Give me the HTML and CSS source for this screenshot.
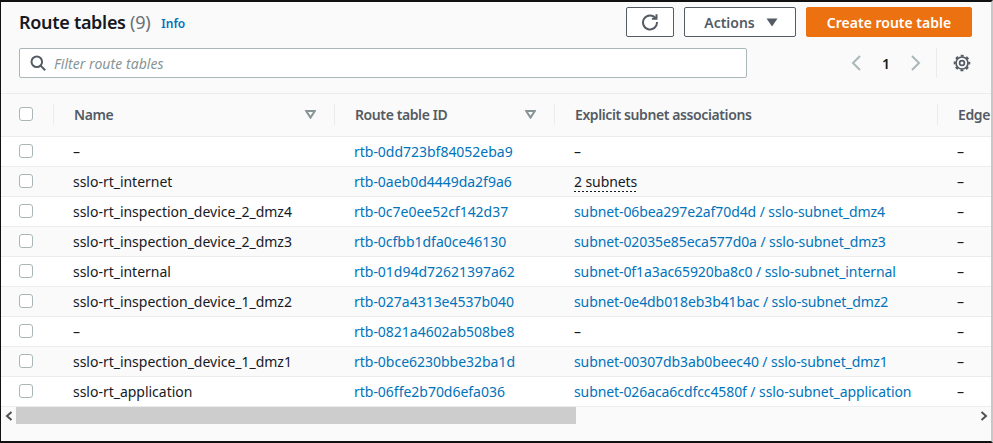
FILE: index.html
```html
<!DOCTYPE html>
<html lang="en">
<head>
<meta charset="utf-8">
<title>Route tables</title>
<link rel="stylesheet" href="styles.css">
</head>
<body>
<main class="frame">
  <header class="top">
    <h1 class="title">Route tables <span class="count">(9)</span></h1>
    <a class="info">Info</a>
    <div class="actions">
      <button class="btn btn-icon"><svg width="18" height="18" viewBox="0 0 18 18" fill="none" stroke="#545b64" stroke-width="2"><path d="M14.6 5.2A7 7 0 1 0 16 9"/><path d="M15.5 1.2v4.6h-4.6" stroke-linejoin="miter"/></svg></button>
      <button class="btn btn-actions">Actions <svg class="caret" width="12" height="9" viewBox="0 0 12 9"><path d="M0.5 0.5h11L6 8.5z" fill="#545b64"/></svg></button>
      <button class="btn btn-primary">Create route table</button>
    </div>
  </header>
  <div class="toolbar">
    <div class="filter">
      <svg width="16" height="16" viewBox="0 0 16 16" fill="none" stroke="#545b64" stroke-width="2"><circle cx="6.8" cy="6.8" r="5.3"/><path d="M10.6 10.6l4.6 4.6"/></svg>
      <span class="placeholder">Filter route tables</span>
    </div>
    <nav class="pager">
      <svg width="12" height="16" viewBox="0 0 12 16" fill="none" stroke="#aab7b8" stroke-width="2"><path d="M10 1L3 8l7 7"/></svg>
      <span class="page">1</span>
      <svg width="12" height="16" viewBox="0 0 12 16" fill="none" stroke="#aab7b8" stroke-width="2"><path d="M2 1l7 7-7 7"/></svg>
    </nav>
    <div class="settings">
      <svg width="18" height="18" viewBox="0 0 18 18" fill="none" stroke="#545b64"><circle cx="9" cy="9" r="6" stroke-width="1.7"/><circle cx="9" cy="9" r="7.3" stroke-width="2" stroke-dasharray="2.9 2.83" stroke-dashoffset="1.45"/><circle cx="9" cy="9" r="2.4" stroke-width="1.7"/></svg>
    </div>
  </div>
  <div class="table">
    <div class="row head">
      <div class="cell c-check"><span class="box"></span></div>
      <div class="cell c-name"><span class="hlabel">Name</span><svg class="sort" width="11" height="9" viewBox="0 0 11 9"><path d="M1.2 1h8.6L5.5 7.6z" fill="none" stroke="#879596" stroke-width="2"/></svg></div>
      <div class="cell c-id"><span class="hlabel">Route table ID</span><svg class="sort" width="11" height="9" viewBox="0 0 11 9"><path d="M1.2 1h8.6L5.5 7.6z" fill="none" stroke="#879596" stroke-width="2"/></svg></div>
      <div class="cell c-assoc"><span class="hlabel">Explicit subnet associations</span></div>
      <div class="cell c-edge"><span class="hlabel">Edge</span></div>
    </div>
    <div class="row"><div class="cell c-check"><span class="box"></span></div><div class="cell c-name">–</div><div class="cell c-id"><a>rtb-0dd723bf84052eba9</a></div><div class="cell c-assoc">–</div><div class="cell c-edge">–</div></div>
    <div class="row alt"><div class="cell c-check"><span class="box"></span></div><div class="cell c-name">sslo-rt_internet</div><div class="cell c-id"><a>rtb-0aeb0d4449da2f9a6</a></div><div class="cell c-assoc"><span class="dotted">2 subnets</span></div><div class="cell c-edge">–</div></div>
    <div class="row"><div class="cell c-check"><span class="box"></span></div><div class="cell c-name">sslo-rt_inspection_device_2_dmz4</div><div class="cell c-id"><a>rtb-0c7e0ee52cf142d37</a></div><div class="cell c-assoc"><a>subnet-06bea297e2af70d4d / sslo-subnet_dmz4</a></div><div class="cell c-edge">–</div></div>
    <div class="row alt"><div class="cell c-check"><span class="box"></span></div><div class="cell c-name">sslo-rt_inspection_device_2_dmz3</div><div class="cell c-id"><a>rtb-0cfbb1dfa0ce46130</a></div><div class="cell c-assoc"><a>subnet-02035e85eca577d0a / sslo-subnet_dmz3</a></div><div class="cell c-edge">–</div></div>
    <div class="row"><div class="cell c-check"><span class="box"></span></div><div class="cell c-name">sslo-rt_internal</div><div class="cell c-id"><a>rtb-01d94d72621397a62</a></div><div class="cell c-assoc"><a>subnet-0f1a3ac65920ba8c0 / sslo-subnet_internal</a></div><div class="cell c-edge">–</div></div>
    <div class="row alt"><div class="cell c-check"><span class="box"></span></div><div class="cell c-name">sslo-rt_inspection_device_1_dmz2</div><div class="cell c-id"><a>rtb-027a4313e4537b040</a></div><div class="cell c-assoc"><a>subnet-0e4db018eb3b41bac / sslo-subnet_dmz2</a></div><div class="cell c-edge">–</div></div>
    <div class="row"><div class="cell c-check"><span class="box"></span></div><div class="cell c-name">–</div><div class="cell c-id"><a>rtb-0821a4602ab508be8</a></div><div class="cell c-assoc">–</div><div class="cell c-edge">–</div></div>
    <div class="row alt"><div class="cell c-check"><span class="box"></span></div><div class="cell c-name">sslo-rt_inspection_device_1_dmz1</div><div class="cell c-id"><a>rtb-0bce6230bbe32ba1d</a></div><div class="cell c-assoc"><a>subnet-00307db3ab0beec40 / sslo-subnet_dmz1</a></div><div class="cell c-edge">–</div></div>
    <div class="row"><div class="cell c-check"><span class="box"></span></div><div class="cell c-name">sslo-rt_application</div><div class="cell c-id"><a>rtb-06ffe2b70d6efa036</a></div><div class="cell c-assoc"><a>subnet-026aca6cdfcc4580f / sslo-subnet_application</a></div><div class="cell c-edge">–</div></div>
  </div>
  <div class="scrollbar">
    <span class="arrow"><svg width="8" height="10" viewBox="0 0 8 10"><path d="M6.5 1L2 5l4.5 4" fill="none" stroke="#505050" stroke-width="2"/></svg></span>
    <span class="thumb"></span>
    <span class="rail"></span>
    <span class="arrow"><svg width="8" height="10" viewBox="0 0 8 10"><path d="M1.5 1L6 5 1.5 9" fill="none" stroke="#505050" stroke-width="2"/></svg></span>
  </div>
</main>
</body>
</html>
```
FILE: styles.css
```css
* { box-sizing: border-box; }
html, body { margin: 0; padding: 0; }
body {
  width: 993px;
  height: 443px;
  overflow: hidden;
  font-family: "Noto Sans", "Open Sans", sans-serif;
  font-size: 14px;
  color: #16191f;
}
.frame {
  width: 993px;
  height: 443px;
  background: #fafafa;
  border-top: 2px solid #111;
  border-left: 1px solid #111;
  border-bottom: 2px solid #111;
  border-right: 2px solid #c8c8c8;
  display: flex;
  flex-direction: column;
  overflow: hidden;
}
.top {
  display: flex;
  align-items: center;
  height: 30px;
  margin-top: 5px;
  padding-left: 18px;
}
.title {
  margin: 0;
  font-size: 18px;
  line-height: 24px;
  font-weight: 600;
  letter-spacing: -0.3px;
  color: #16191f;
}
.count { font-weight: 400; color: #687078; }
.info {
  margin-left: 11px;
  margin-top: 3px;
  font-size: 12px;
  font-weight: 600;
  color: #0073bb;
}
.actions {
  display: flex;
  gap: 10px;
  margin-left: auto;
  margin-right: 19px;
}
.btn {
  height: 30px;
  font: inherit;
  font-weight: 600;
  border-radius: 2px;
  border: 1px solid #545b64;
  background: #fff;
  color: #545b64;
  display: flex;
  align-items: center;
  justify-content: center;
  padding: 0;
}
.btn-icon { width: 48px; }
.btn-actions { width: 112px; gap: 11px; padding-left: 2px; }
.btn-primary { width: 166px; background: #ec7211; border-color: #ec7211; color: #fff; }
.toolbar {
  display: flex;
  align-items: center;
  height: 30px;
  margin-top: 11px;
  padding-left: 18px;
}
.filter {
  width: 728px;
  height: 30px;
  background: #fff;
  border: 1px solid #aab7b8;
  border-radius: 2px;
  display: flex;
  align-items: center;
  gap: 8px;
  padding-left: 10px;
}
.placeholder { font-style: italic; color: #879596; font-size: 14px; letter-spacing: 0.05px; }
.pager {
  display: flex;
  align-items: center;
  margin-left: 103px;
  width: 86px;
  gap: 20px;
}
.page { font-weight: 600; font-size: 14px; }
.settings {
  height: 30px;
  padding-left: 16px;
  border-left: 1px solid #eaeded;
  display: flex;
  align-items: center;
}
.table {
  margin-top: 15px;
  border-top: 1px solid #eaeded;
  overflow: hidden;
}
.row {
  display: grid;
  grid-template-columns: 52px 281px 220px 383px 55px;
  height: 30px;
  align-items: center;
  background: #fff;
  border-bottom: 1px solid #eaeded;
}
.row.alt { background: #fafafa; }
.row.head { height: 43px; background: #fafafa; font-weight: 600; color: #545b64; }
.cell { padding-left: 20px; white-space: nowrap; }
.c-check { padding-left: 18px; display: flex; align-items: center; }
.c-name, .c-id { letter-spacing: -0.02px; }
.c-assoc { letter-spacing: -0.09px; }
.head .cell { display: flex; align-items: center; height: 21px; margin-top: -1px; border-left: 1px solid #eaeded; padding-right: 18px; letter-spacing: -0.4px; }
.head .c-check { border-left: 0; }
.head .c-edge { padding-right: 0; }
.hlabel { flex: 1; }
.sort { flex: none; }
.box {
  width: 14px;
  height: 14px;
  margin-top: -1px;
  background: #fff;
  border: 1px solid #aab7b8;
  border-radius: 3px;
}
a { color: #0073bb; text-decoration: none; }
.dotted {
  display: inline-block;
  line-height: 21px;
  background-image: repeating-linear-gradient(to right, #16191f 0 2px, transparent 2px 4px);
  background-size: 100% 1px;
  background-position: 0 100%;
  background-repeat: no-repeat;
}
.scrollbar { display: flex; height: 17px; width: 990px; }
.arrow { width: 15px; display: flex; align-items: center; justify-content: center; flex: none; }
.thumb { width: 560px; background: #cdcdcd; flex: none; }
.rail { flex: 1; }
```
